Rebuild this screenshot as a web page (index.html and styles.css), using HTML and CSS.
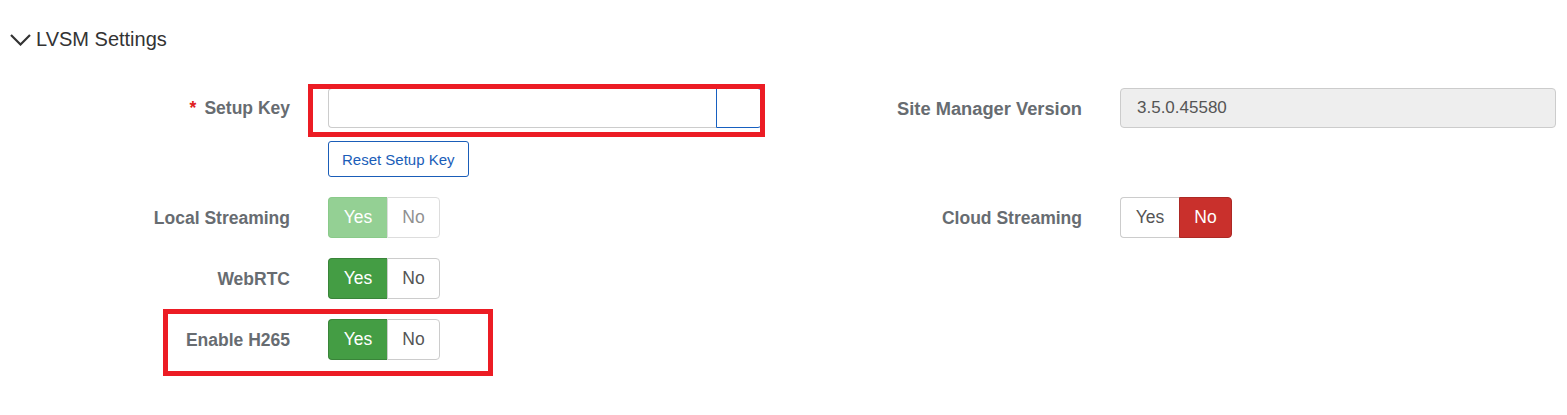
FILE: index.html
```html
<!DOCTYPE html>
<html lang="en">
<head>
<meta charset="utf-8">
<title>LVSM Settings</title>
<link rel="stylesheet" href="styles.css">
</head>
<body>
<div class="panel">
  <div class="panel-head">
    <svg class="chev" width="21" height="12" viewBox="0 0 21 12" aria-hidden="true"><polyline points="1,1 10.5,10.5 20,1" fill="none" stroke="#333" stroke-width="2.2" stroke-linejoin="miter"/></svg>
    <span class="title">LVSM Settings</span>
  </div>
  <div class="form">
    <div class="field">
      <label class="lbl"><span class="req">*</span>Setup Key</label>
      <div class="ctrl">
        <div class="input-group">
          <input class="inp" type="text" value="">
          <span class="addon"></span>
          <span class="mark mark-key"></span>
        </div>
        <button class="btn-outline" type="button">Reset Setup Key</button>
      </div>
    </div>
    <div class="field">
      <label class="lbl lbl-wide">Site Manager Version</label>
      <div class="ctrl">
        <div class="inp inp-ro">3.5.0.45580</div>
      </div>
    </div>

    <div class="field">
      <label class="lbl">Local Streaming</label>
      <div class="ctrl">
        <div class="toggle disabled">
          <span class="opt on-green">Yes</span><span class="opt">No</span>
        </div>
      </div>
    </div>
    <div class="field">
      <label class="lbl">Cloud Streaming</label>
      <div class="ctrl">
        <div class="toggle">
          <span class="opt off">Yes</span><span class="opt on-red">No</span>
        </div>
      </div>
    </div>

    <div class="field">
      <label class="lbl">WebRTC</label>
      <div class="ctrl">
        <div class="toggle">
          <span class="opt on-dark">Yes</span><span class="opt">No</span>
        </div>
      </div>
    </div>
    <div class="field empty"></div>

    <div class="field">
      <label class="lbl">Enable H265</label>
      <div class="ctrl">
        <div class="toggle">
          <span class="opt on-dark">Yes</span><span class="opt">No</span>
        </div>
      </div>
      <span class="mark mark-h265"></span>
    </div>
    <div class="field empty"></div>
  </div>
</div>
</body>
</html>
```

FILE: styles.css
```css
* { box-sizing: border-box; }
html, body { margin: 0; padding: 0; background: #fff; }
body {
  font-family: "Liberation Sans", Arial, sans-serif;
  font-size: 16px;
  color: #333;
  min-height: 415px;
}
.panel { padding-top: 27px; padding-bottom: 40px; }
.panel-head {
  display: flex;
  align-items: center;
  padding-left: 10px;
  height: 24px;
  line-height: 24px;
}
.chev { display: block; margin-top: 1px; margin-right: 5px; }
.title { font-size: 20px; color: #333; }

.form {
  margin-top: 37px;
  display: grid;
  grid-template-columns: 762px 764px;
  column-gap: 30px;
  row-gap: 20px;
  align-items: start;
}
.field {
  position: relative;
  display: flex;
  align-items: flex-start;
  gap: 38px;
}
.lbl {
  flex: 0 0 290px;
  text-align: right;
  font-weight: bold;
  font-size: 17.5px;
  color: #676c71;
  height: 41px;
  line-height: 42px;
  white-space: nowrap;
}
.field:first-child .lbl, .field:nth-child(2) .lbl { height: 40px; line-height: 41px; }
.lbl-wide { font-size: 18.3px; }
.req { color: #e02020; margin-right: 8px; }
.ctrl { flex: 1; display: flex; flex-direction: column; align-items: flex-start; }

.input-group {
  position: relative;
  display: flex;
  width: 100%;
  height: 40px;
}
.inp {
  height: 40px;
  border: 1px solid #ccc;
  border-radius: 4px;
  font: inherit;
  font-size: 17px;
  color: #555;
  padding: 0 16px;
  line-height: 38px;
  width: 100%;
}
.input-group .inp {
  flex: 0 0 388px;
  width: 388px;
  border-radius: 4px 0 0 4px;
  border-right: 0;
  outline: none;
}
.addon {
  flex: 1;
  border: 1px solid #1760c0;
  border-radius: 0 4px 4px 0;
}
.inp-ro { background: #eee; }

.btn-outline {
  margin-top: 13px;
  height: 36px;
  padding: 0 13px;
  font-family: inherit;
  font-size: 15px;
  color: #1a5db8;
  background: #fff;
  border: 1px solid #1a5db8;
  border-radius: 3px;
}

.toggle {
  display: flex;
  height: 41px;
}
.toggle.disabled { opacity: .65; }
.opt {
  display: flex;
  align-items: center;
  justify-content: center;
  height: 41px;
  border: 1px solid #ccc;
  background: #fff;
  color: #555;
  font-size: 17.5px;
}
.opt:first-child { width: 59px; border-radius: 4px 0 0 4px; border-right: 0; }
.opt:last-child { width: 53px; border-radius: 0 4px 4px 0; }
.opt.on-green { background: #5cb85c; border-color: #4cae4c; color: #fff; }
.opt.on-dark { background: #449d44; border-color: #398439; color: #fff; }
.opt.on-red { background: #c9302c; border-color: #ac2925; color: #fff; }

.mark {
  position: absolute;
  border: 5px solid #ec1c24;
  pointer-events: none;
}
.mark-key { top: -4px; left: -20px; right: -3px; bottom: -9px; }
.mark-h265 { top: -10px; left: 163px; width: 330px; height: 67px; }
```
